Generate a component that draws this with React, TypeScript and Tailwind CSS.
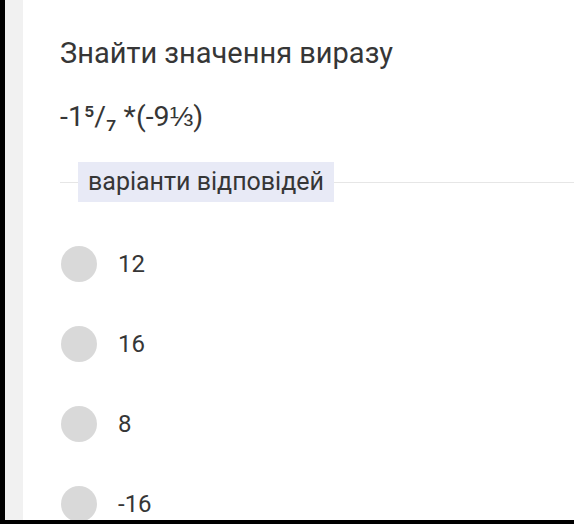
const options = ['12', '16', '8', '-16'];

export default function App() {
  return (
    <div className="flex h-[524px] w-[574px] flex-col overflow-hidden bg-black font-['Roboto',sans-serif] text-[#363636]">
      <div className="flex min-h-0 flex-1 pl-[5px]">
        {/* light side strip */}
        <div className="w-[18px] bg-[#f1f1f1]" />

        {/* question card */}
        <div className="min-h-0 flex-1 overflow-hidden bg-white pl-[37px] pt-[36px]">
          <h1 className="text-[29px] leading-[34px]">Знайти значення виразу</h1>
          <p className="mt-[30px] text-[28.5px] leading-[34px]">-1⁵/₇ *(-9⅓)</p>

          <div className="mt-[28px] flex items-center">
            <div className="h-px w-[18px] bg-[#e6e6e6]" />
            <span className="bg-[#e8eaf6] px-[10px] py-[4px] text-[25px] leading-[32px]">варіанти відповідей</span>
            <div className="h-px flex-1 bg-[#e6e6e6]" />
          </div>

          <ul className="mt-[44px] flex flex-col gap-[44px]">
            {options.map((o) => (
              <li key={o} className="flex items-center gap-[21px] pl-[1px]">
                <span className="size-[36px] shrink-0 rounded-full bg-[#d9d9d9]" />
                <span className="text-[24px] leading-[36px]">{o}</span>
              </li>
            ))}
          </ul>
        </div>
      </div>
      <div className="h-[4px] bg-black" />
    </div>
  );
}
